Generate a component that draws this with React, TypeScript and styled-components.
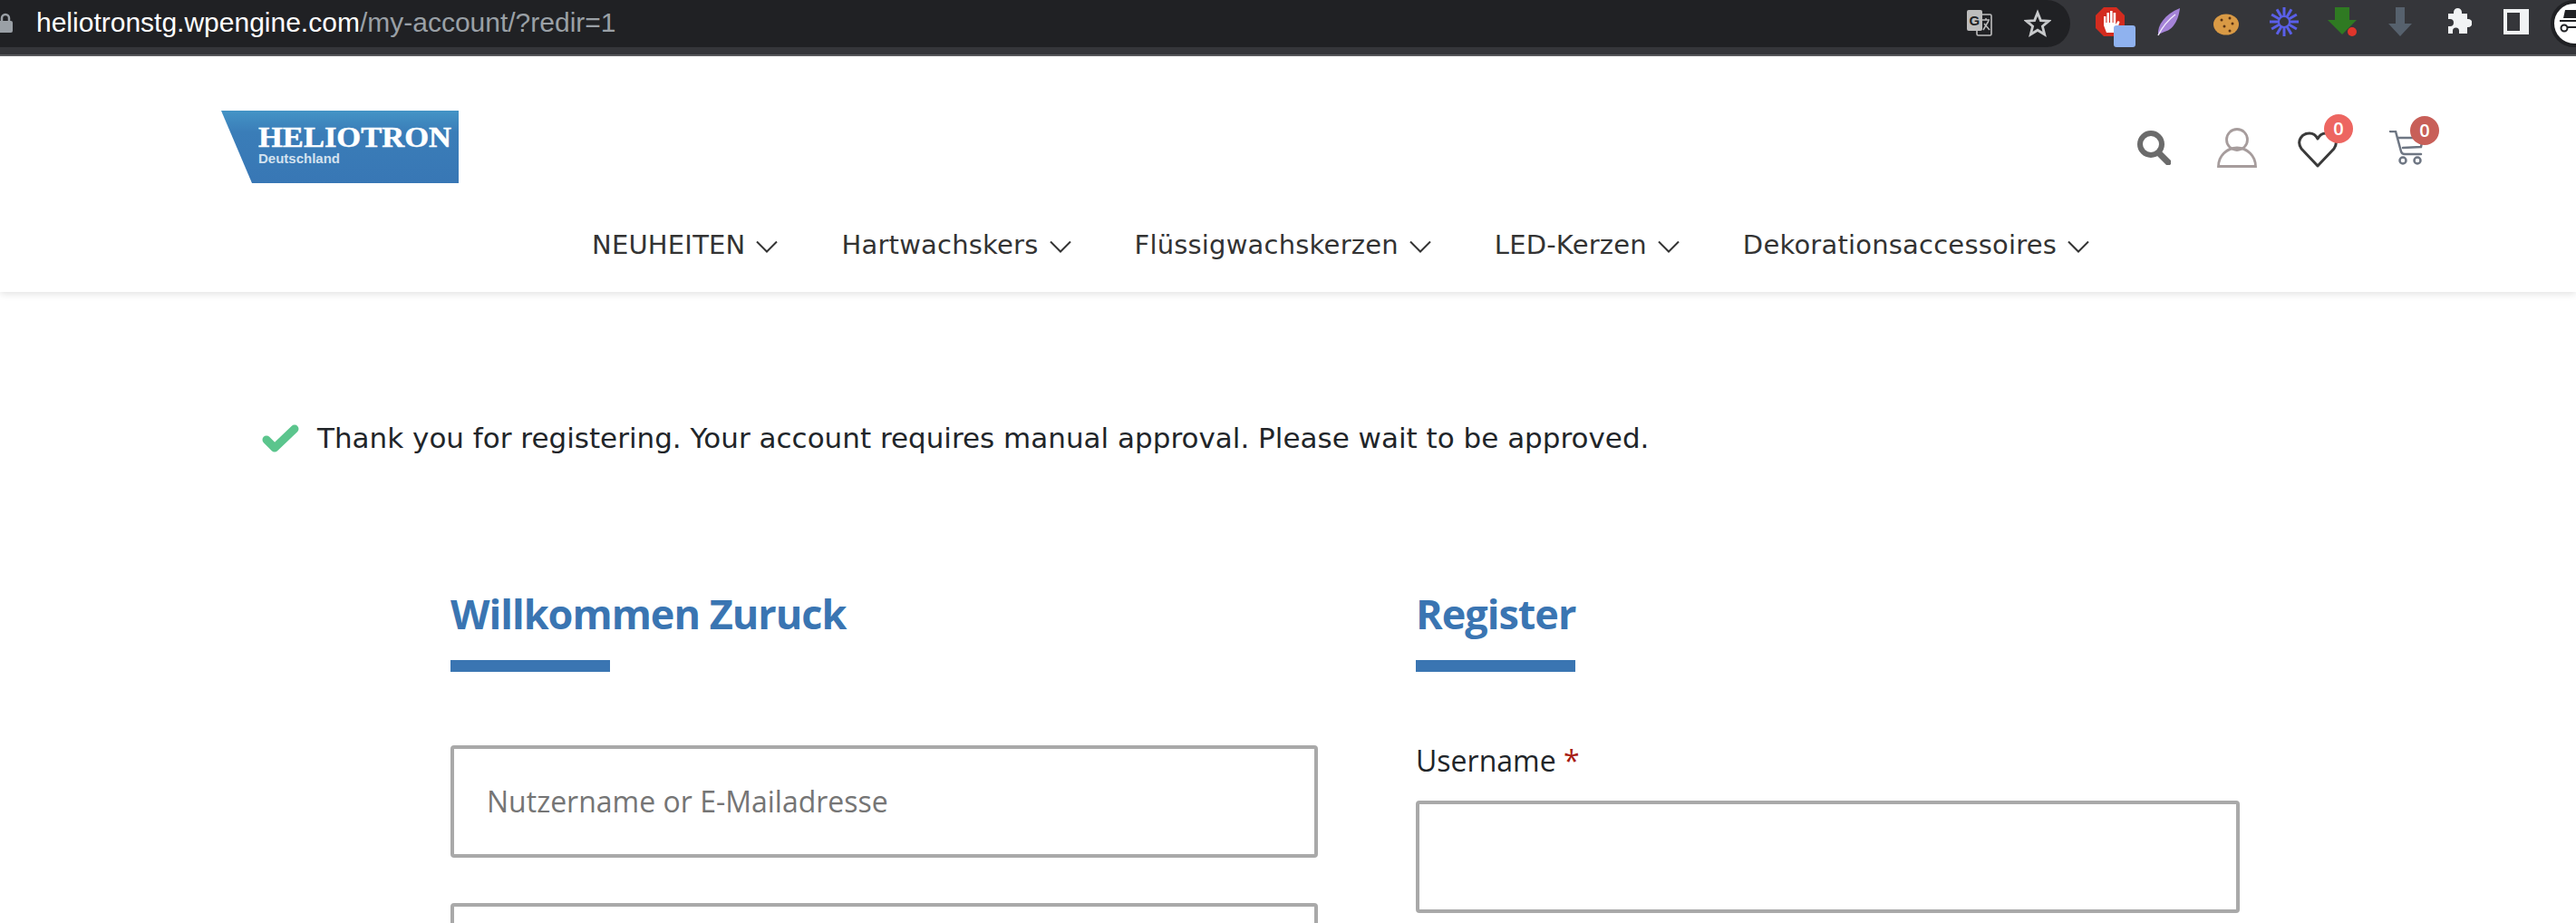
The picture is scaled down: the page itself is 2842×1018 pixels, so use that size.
import React from "react";
import styled, { createGlobalStyle } from "styled-components";

const GlobalStyle = createGlobalStyle`
  html, body {
    margin: 0;
    padding: 0;
    background: #fff;
    overflow: hidden;
  }
  * { box-sizing: border-box; }
`;

const Page = styled.div`
  width: 2842px;
  height: 1018px;
  overflow: hidden;
  font-family: "Open Sans", "Liberation Sans", sans-serif;
  color: #212529;
`;

const BrowserBar = styled.div`
  height: 62px;
  background: #35363a;
  border-bottom: 2px solid #5a5b5e;
  display: flex;
  align-items: flex-start;
  overflow: hidden;
`;

const AddressPill = styled.div`
  flex: none;
  width: 2284px;
  height: 52px;
  background: #202124;
  border-radius: 0 26px 26px 0;
  display: flex;
  align-items: center;
  padding-right: 21px;
  padding-bottom: 2px;
  font-family: "Liberation Sans", sans-serif;
  font-size: 30px;
`;

const Lock = styled.svg`
  width: 16px;
  height: 24px;
  margin-left: -2px;
  margin-right: 26px;
  flex: none;
`;

const Host = styled.span`
  color: #fff;
`;

const UrlPath = styled.span`
  color: #9aa0a6;
`;

const PillIcons = styled.div`
  margin-left: auto;
  display: flex;
  align-items: center;
  gap: 35px;
  padding-top: 2px;
`;

const Extensions = styled.div`
  flex: 1;
  display: flex;
  align-items: flex-start;
  padding: 8px 0 0 28px;
`;

const ToolbarIcon = styled.svg<{ $w: number; $h?: number; $ml?: number }>`
  width: ${(p) => p.$w}px;
  height: ${(p) => p.$h ?? 32}px;
  margin-left: ${(p) => p.$ml ?? 0}px;
  flex: none;
`;

const Avatar = styled.svg`
  width: 52px;
  height: 52px;
  margin: -8px 0 0 24px;
  flex: none;
`;

const Header = styled.header`
  height: 260px;
  background: #fff;
  box-shadow: 0 2px 8px rgba(0, 0, 0, 0.12);
  display: flex;
  flex-direction: column;
  position: relative;
`;

const HeaderTop = styled.div`
  display: flex;
  justify-content: space-between;
  align-items: flex-start;
  padding: 60px 168px 0 244px;
  height: 182px;
`;

const Logo = styled.svg`
  width: 262px;
  height: 80px;
  display: block;
`;

const HeaderIcons = styled.div`
  display: flex;
  align-items: center;
  gap: 51px;
  padding-top: 19px;
  height: 63px;
`;

const IconWrap = styled.div<{ $ml: number; $end?: boolean }>`
  position: relative;
  display: flex;
  margin-left: ${(p) => p.$ml}px;
  align-self: ${(p) => (p.$end ? "flex-end" : "center")};
`;

const Badge = styled.span<{ $bg: string; $top: number }>`
  position: absolute;
  top: ${(p) => p.$top}px;
  right: -17px;
  width: 32px;
  height: 32px;
  border-radius: 50%;
  background: ${(p) => p.$bg};
  color: #fff;
  font-size: 20px;
  font-weight: 600;
  line-height: 32px;
  text-align: center;
`;

const Nav = styled.nav`
  display: flex;
  gap: 70px;
  padding-left: 653px;
  margin-top: 6px;
`;

const NavItem = styled.a`
  display: flex;
  align-items: center;
  gap: 12px;
  font-family: "DejaVu Sans", sans-serif;
  font-size: 29px;
  letter-spacing: 0.2px;
  line-height: 40px;
  color: #333;
`;

const Notice = styled.div`
  display: flex;
  align-items: center;
  gap: 20px;
  padding: 139px 0 0 289px;
  font-family: "DejaVu Sans", sans-serif;
  font-size: 31px;
  line-height: 44px;
  color: #212529;
`;

const Columns = styled.main`
  display: grid;
  grid-template-columns: 957px 909px;
  column-gap: 108px;
  padding: 0 0 0 497px;
  margin-top: 141px;
`;

const Heading = styled.h2`
  margin: 0;
  font-size: 45px;
  line-height: 62px;
  font-weight: 700;
  letter-spacing: -1px;
  color: #3a75b2;
`;

const Rule = styled.div`
  width: 176px;
  height: 13px;
  margin-top: 20px;
  background: #3a75b2;
`;

const LoginFields = styled.div`
  margin-top: 81px;
  display: flex;
  flex-direction: column;
  gap: 50px;
`;

const Input = styled.input`
  display: block;
  width: 100%;
  height: 124px;
  padding: 0 36px 2px;
  border: 4px solid #a9a9a9;
  border-radius: 4px;
  background: #fff;
  font-family: inherit;
  font-size: 32px;
  outline: none;

  &::placeholder {
    color: #757575;
    opacity: 1;
  }
`;

const FieldLabel = styled.label`
  display: block;
  margin: 76px 0 22px;
  font-size: 32px;
  line-height: 44px;
  color: #212529;
`;

const Required = styled.span`
  color: #a81c12;
`;

const ChevronSvg = styled.svg`
  width: 24px;
  height: 14px;
  margin-top: 4px;
`;

const Chevron = () => (
  <ChevronSvg viewBox="0 0 24 14" fill="none" stroke="#333" strokeWidth="2">
    <path d="M1 1.5l11 11 11-11" />
  </ChevronSvg>
);

const navItems = ["NEUHEITEN", "Hartwachskers", "Flüssigwachskerzen", "LED-Kerzen", "Dekorationsaccessoires"];
const burstAngles = [0, 30, 60, 90, 120, 150, 180, 210, 240, 270, 300, 330];

export default function App() {
  return (
    <Page>
      <GlobalStyle />
      <BrowserBar>
        <AddressPill>
          <Lock viewBox="0 0 16 24">
            <path d="M4 11V7a4 4 0 0 1 8 0v4" fill="none" stroke="#9aa0a6" strokeWidth="2.5" />
            <rect x="0" y="10" width="16" height="13" rx="2" fill="#9aa0a6" />
          </Lock>
          <Host>heliotronstg.wpengine.com</Host>
          <UrlPath>/my-account/?redir=1</UrlPath>
          <PillIcons>
            <ToolbarIcon $w={28} viewBox="0 0 28 32">
              <rect x="11" y="6" width="16" height="23" rx="1.5" fill="#202124" stroke="#bdbdbd" strokeWidth="1.6" />
              <rect x="0" y="1" width="17" height="23" rx="2" fill="#bdbdbd" />
              <text x="2.5" y="18" fontFamily="Liberation Sans, sans-serif" fontWeight="700" fontSize="15" fill="#202124">G</text>
              <path d="M17 12h8M21 10v2M18 23l6-10M19 16l6 7" stroke="#bdbdbd" strokeWidth="1.5" fill="none" />
            </ToolbarIcon>
            <ToolbarIcon $w={30} viewBox="0 0 30 32">
              <path d="M15 4l3.400 8.600 9 .6-7 5.800 2.300 9L15 23.200 7.300 28l2.300-9-7-5.800 9-.6z" fill="none" stroke="#c8cacc" strokeWidth="2.800" />
            </ToolbarIcon>
          </PillIcons>
        </AddressPill>
        <Extensions>
          <ToolbarIcon $w={44} $h={44} viewBox="0 0 44 44">
            <path d="M9 0h14l9 9v14l-9 9H9l-9-9V9z" fill="#d32c1f" />
            <path d="M9 20V10h2.400v7h1V6h2.600v11h1V4h2.600v13h1V6h2.600v13l2.400-4 2 1-4 12H12z" fill="#fff" />
            <rect x="20" y="20" width="24" height="24" rx="3" fill="#8fb2ef" />
          </ToolbarIcon>
          <ToolbarIcon $w={25} $ml={24} viewBox="0 0 25 32">
            <path d="M25 1C24 10 20 24 8 27L1 30C0 20 8 8 25 1z" fill="#a583d8" />
            <path d="M20 8C12 14 6 21 1 31" stroke="#efe8fa" strokeWidth="1.500" fill="none" />
          </ToolbarIcon>
          <ToolbarIcon $w={28} $ml={37} viewBox="0 0 28 32">
            <ellipse cx="14" cy="19" rx="14" ry="11.500" fill="#d99a45" />
            <circle cx="9" cy="14" r="1.500" fill="#5a3415" />
            <circle cx="18" cy="12" r="1.500" fill="#5a3415" />
            <circle cx="12" cy="21" r="1.500" fill="#5a3415" />
            <circle cx="21" cy="18" r="1.500" fill="#5a3415" />
            <circle cx="18" cy="26" r="1.500" fill="#5a3415" />
          </ToolbarIcon>
          <ToolbarIcon $w={32} $ml={34} viewBox="0 0 32 32" fill="none" stroke="#5a5fe8">
            {burstAngles.map((a) => (
              <path key={a} d="M16 0v10" strokeWidth="3" transform={`rotate(${a} 16 16)`} />
            ))}
            <circle cx="16" cy="16" r="6" strokeWidth="2" />
          </ToolbarIcon>
          <ToolbarIcon $w={32} $ml={32} viewBox="0 0 32 32">
            <path d="M8 0h16v14h8L16 30 0 14h8z" fill="#2f7a22" />
            <circle cx="27" cy="27" r="5" fill="#e0352b" />
          </ToolbarIcon>
          <ToolbarIcon $w={26} $ml={35} viewBox="0 0 26 32">
            <path d="M8 0h10v18h8L13 32 0 18h8z" fill="#56616d" />
          </ToolbarIcon>
          <ToolbarIcon $w={29} $ml={37} viewBox="0 0 29 32">
            <path d="M3 7h6V5.500a4.500 4.500 0 0 1 9 0V7h6v6h1a4.500 4.500 0 0 1 0 9h-1v7H15v-3a3.500 3.500 0 0 0-7 0v3H3v-8h2a4 4 0 0 0 0-8H3z" fill="#f1f3f4" />
          </ToolbarIcon>
          <ToolbarIcon $w={28} $ml={35} viewBox="0 0 28 32">
            <path fillRule="evenodd" d="M0 2h28v28H0zM4 6v20h14V6z" fill="#f1f3f4" />
          </ToolbarIcon>
          <Avatar viewBox="0 0 52 52">
            <circle cx="26" cy="26" r="24" fill="#fff" stroke="#202124" strokeWidth="4" />
            <path d="M14 20l2-9h16l2 9zM10 22h28v2H10z" fill="#202124" />
            <circle cx="15" cy="31" r="3.500" fill="none" stroke="#202124" strokeWidth="2" />
            <path d="M19 30h12" stroke="#202124" strokeWidth="2" />
          </Avatar>
        </Extensions>
      </BrowserBar>
      <Header>
        <HeaderTop>
          <Logo viewBox="0 0 262 80">
            <defs>
              <linearGradient id="logoBlue" x1="0" y1="0" x2="0" y2="1">
                <stop offset="0" stopColor="#4494c6" />
                <stop offset="0.3" stopColor="#3a7db8" />
                <stop offset="1" stopColor="#3877b5" />
              </linearGradient>
            </defs>
            <path d="M0 0h262v80H34z" fill="url(#logoBlue)" />
            <text x="41" y="40" fontFamily="Liberation Serif, serif" fontWeight="700" fontSize="31" textLength="213" lengthAdjust="spacingAndGlyphs" stroke="#fff" strokeWidth="0.5" fill="#fff">HELIOTRON</text>
            <text x="41" y="58" fontFamily="Liberation Sans, sans-serif" fontWeight="700" fontSize="15" textLength="90" lengthAdjust="spacingAndGlyphs" fill="#d3e2ef">Deutschland</text>
          </Logo>
          <HeaderIcons>
            <svg width="37" height="38" viewBox="0 0 37 38" fill="none" stroke="#6b6b6b">
              <circle cx="15" cy="15" r="12" strokeWidth="6" />
              <path d="M24 25l10 10" strokeWidth="7" strokeLinecap="round" />
            </svg>
            <svg width="44" height="44" viewBox="0 0 44 44" fill="none" stroke="#a69c9c" strokeWidth="2.800">
              <circle cx="22" cy="13" r="11.500" />
              <path d="M1.500 42.500a20.500 20.500 0 0 1 41 0z" />
            </svg>
            <IconWrap $ml={-6} $end>
              <svg width="44" height="40" viewBox="0 0 44 40" fill="none" stroke="#3a3a3a" strokeWidth="3">
                <path d="M22 38L4 19C-2 10 5 2 13 2c4 0 7 2 9 6 2-4 5-6 9-6 8 0 15 8 9 17z" strokeLinejoin="round" />
              </svg>
              <Badge $bg="#ed6661" $top={-19}>0</Badge>
            </IconWrap>
            <IconWrap $ml={6}>
              <svg width="38" height="38" viewBox="0 0 38 38" fill="none" stroke="#6e7683" strokeWidth="2.500">
                <path d="M1 1h6l6 22c.5 2 2 3 4 3h18M9 8h28l-2 10-20 1" strokeLinecap="round" />
                <circle cx="15" cy="33" r="3.500" />
                <circle cx="31" cy="33" r="3.500" />
              </svg>
              <Badge $bg="#c85f58" $top={-16}>0</Badge>
            </IconWrap>
          </HeaderIcons>
        </HeaderTop>
        <Nav>
          {navItems.map((item) => (
            <NavItem key={item}>
              {item}
              <Chevron />
            </NavItem>
          ))}
        </Nav>
      </Header>
      <Notice>
        <svg width="41" height="31" viewBox="0 0 41 31" fill="none" stroke="#5bc58d" strokeWidth="9" strokeLinecap="round" strokeLinejoin="round">
          <path d="M5 17l9 9L36 5" />
        </svg>
        Thank you for registering. Your account requires manual approval. Please wait to be approved.
      </Notice>
      <Columns>
        <section>
          <Heading>Willkommen Zuruck</Heading>
          <Rule />
          <LoginFields>
            <Input placeholder="Nutzername or E-Mailadresse" />
            <Input />
          </LoginFields>
        </section>
        <section>
          <Heading>Register</Heading>
          <Rule />
          <FieldLabel>
            Username <Required>*</Required>
          </FieldLabel>
          <Input />
        </section>
      </Columns>
    </Page>
  );
}
